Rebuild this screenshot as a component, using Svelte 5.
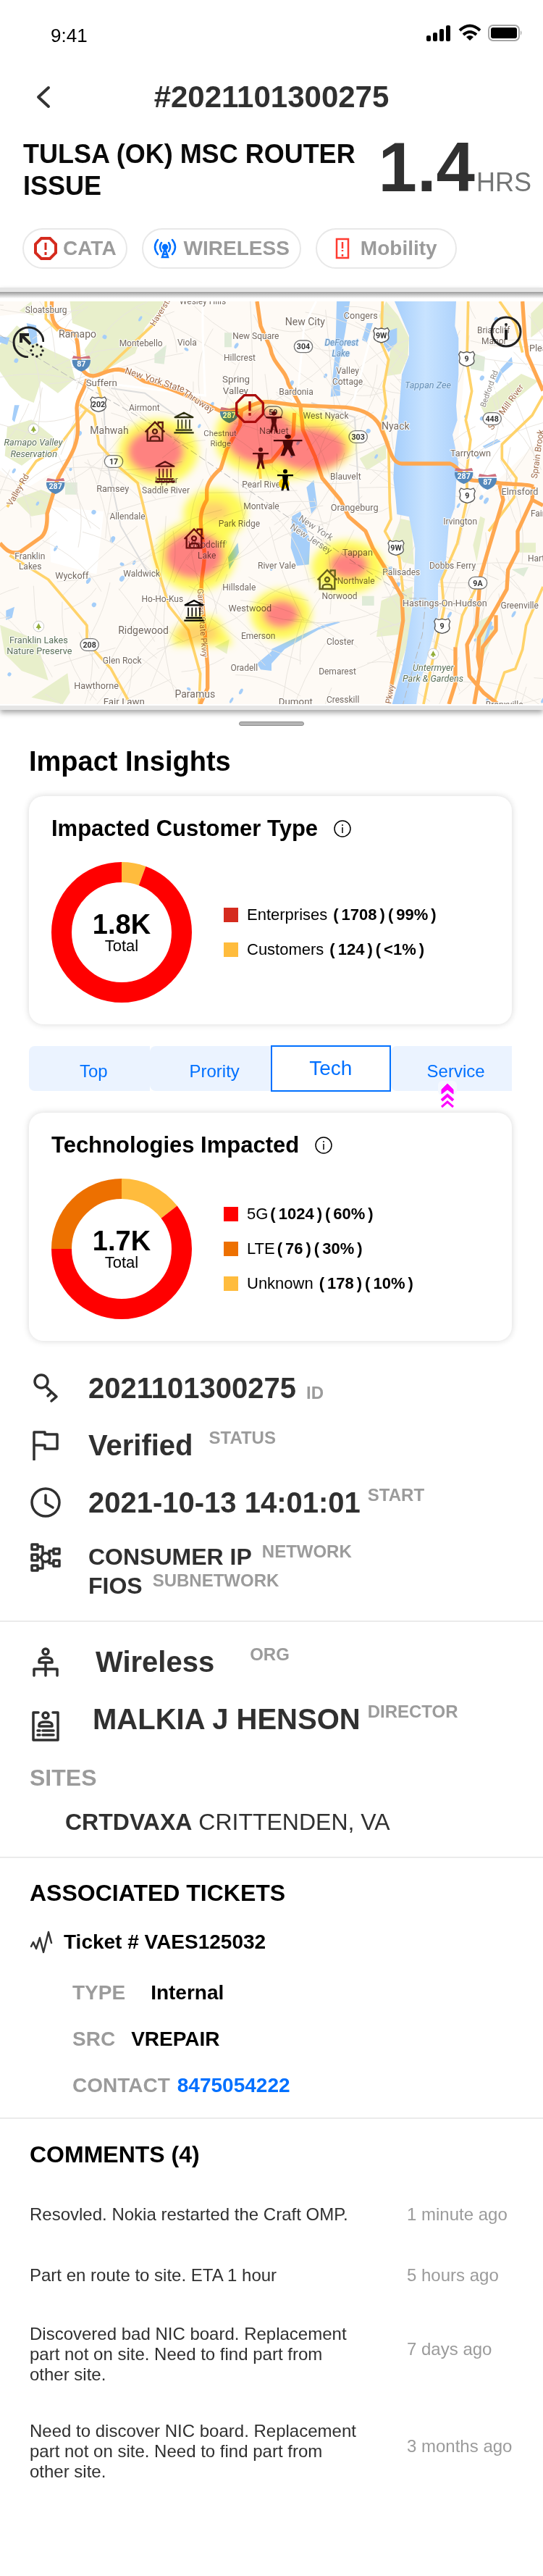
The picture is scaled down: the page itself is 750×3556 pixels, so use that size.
<script>
  const impact = [
    {
      title: 'Impacted Customer Type', total: '1.8K',
      slices: [{ color: '#ffbc3d', from: 0, size: 5.6 }, { color: '#ff0000', from: 5.6, size: 94.4 }],
      legend: [
        { color: '#d52b1e', name: 'Enterprises', count: '1708', share: '99%' },
        { color: '#ffbc3d', name: 'Customers', count: '124', share: '<1%' }
      ]
    },
    {
      title: 'Technologies Impacted', total: '1.7K',
      slices: [{ color: '#ffbc3d', from: 0, size: 14.5 }, { color: '#ff0000', from: 14.5, size: 60.5 }, { color: '#ed7000', from: 75, size: 25 }],
      legend: [
        { color: '#ff0000', name: '5G', count: '1024', share: '60%', tight: true },
        { color: '#ed7000', name: 'LTE', count: '76', share: '30%', tight: true },
        { color: '#ffbc3d', name: 'Unknown', count: '178', share: '10%' }
      ]
    }
  ];
  const tabs = ['Top', 'Prority', 'Tech', 'Service'];
  let selected = $state('Tech');

  const ticket = [
    { label: 'TYPE', value: 'Internal', gap: 'wide' },
    { label: 'SRC', value: 'VREPAIR', gap: 'mid' }
  ];
  const comments = [
    { text: 'Resovled. Nokia restarted the Craft OMP.', time: '1 minute ago' },
    { text: 'Part en route to site. ETA 1 hour', time: '5 hours ago' },
    { text: 'Discovered bad NIC board. Replacement part not on site. Need to find part from other site.', time: '7 days ago', long: true },
    { text: 'Need to discover NIC board. Replacement part not on site. Need to find part from other site.', time: '3 months ago', long: true }
  ];

  // Map places, split by quadrant: x, baseline y, text, size, kind
  const quads = [
    { x: 0, y: -48, places: [
      [191, 95, 'Sloatsburg', 36], [321, 199, 'Ramapo', 42], [584, 235, 'Montebello', 36], [775, 232, 'Viola', 36],
      [840, 60, 'Wesley Hills', 36], [1060, 204, 'New Square', 36], [993, 295, 'Hillcrest', 36], [978, 385, 'Spring', 40],
      [976, 433, 'Valley', 40], [421, 399, 'Suffern', 40], [598, 500, 'Airmont', 36], [453, 596, 'Mahwah', 42],
      [912, 605, 'Chestnut', 34], [914, 648, 'Ridge', 34], [138, 645, 'Ramapo Valley', 38, 'park'], [140, 692, 'Reservation', 38, 'park'],
      [467, 836, 'Ramsey', 38], [690, 802, 'Upper', 36], [687, 844, 'Saddle River', 36], [1088, 818, 'Pearl River', 36], [1135, 596, 'Nanuet', 38]
    ] },
    { x: 1125, y: -48, places: [
      [139, 148, 'New City', 42], [370, 121, 'Congers', 38], [290, 231, 'DeForest', 36, 'water'], [287, 276, 'Lake', 36, 'water'],
      [315, 349, 'Valley', 36], [315, 394, 'Cottage', 36], [102, 436, 'Bardonia', 36], [225, 534, 'West Nyack', 36],
      [514, 580, 'Nyack', 42], [648, 409, 'Tappan Zee', 38, 'water'], [920, 181, 'Briarcliff', 36], [922, 224, 'Manor', 36],
      [1175, 255, 'Pleasantville', 38], [825, 690, 'Tarrytown', 38], [307, 787, 'Blauvelt', 36], [1029, 850, 'Elmsford', 38]
    ] },
    { x: 0, y: 822, places: [
      [528, 82, 'Allendale', 36], [1083, 40, 'Montvale', 36], [991, 112, 'Park Ridge', 36], [857, 199, 'Woodcliff', 36], [857, 243, 'Lake', 36],
      [124, 246, 'Franklin', 36], [125, 289, 'Lakes', 36], [298, 326, 'Wyckoff', 38], [587, 317, 'Waldwick', 36], [1147, 284, 'River Vale', 36],
      [991, 376, 'Hillsdale', 36], [673, 422, 'Ho-Ho-Kus', 36], [1036, 463, 'Westwood', 38], [1070, 577, 'Emerson', 36],
      [594, 556, 'Ridgewood', 42], [160, 593, 'Franklin Lakes', 38, 'green'], [163, 640, 'Nature Preserve', 38, 'green'],
      [506, 679, 'Glen Rock', 36], [1012, 709, 'Oradell', 36], [399, 783, 'Hawthorne', 38], [808, 819, 'Paramus', 42], [514, 849, 'Fair Lawn', 40]
    ] },
    { x: 1125, y: 822, places: [
      [344, 46, 'Orangeburg', 38], [357, 231, 'Tappan', 38], [538, 313, 'Palisades', 36], [350, 347, 'Northvale', 36], [282, 412, 'Norwood', 36],
      [285, 600, 'Closter', 36], [273, 722, 'Demarest', 36], [296, 840, 'Cresskill', 36], [100, 849, 'Dumont', 40],
      [782, 101, 'Irvington', 36], [750, 285, 'Dobbs Ferry', 36], [718, 441, 'Hastings-On-Hudson', 38], [1028, 450, 'Greenville', 36],
      [1140, 70, 'Fairview', 36], [1140, 256, 'Hartsdale', 36], [670, 707, 'Untermyer', 38, 'park'], [669, 753, 'Park & Gardens', 38, 'park'],
      [965, 862, 'Bronxville', 36]
    ] }
  ];
  const shields = [
    { t: '87', x: 337, y: 257, k: 'i' }, { t: '287', x: 230, y: 764, k: 'i' }, { t: '287', x: 950, y: 470, k: 'i' },
    { t: '202', x: 408, y: 426, k: 'u' }, { t: '17', x: 471, y: 663, k: 's' }, { t: '304', x: 1257, y: 187, k: 's' },
    { t: '9W', x: 1580, y: 140, k: 'u' }, { t: '9', x: 1934, y: 238, k: 'u' }, { t: '448', x: 2039, y: 486, k: 's' },
    { t: '303', x: 1484, y: 561, k: 's' }, { t: '287', x: 1922, y: 722, k: 'i' }, { t: '87', x: 2020, y: 746, k: 'i' },
    { t: '9', x: 1936, y: 804, k: 'u' }, { t: '208', x: 371, y: 1422, k: 's' }, { t: '9W', x: 1641, y: 1020, k: 'u' },
    { t: '9A', x: 1980, y: 1166, k: 's' }, { t: '9', x: 1832, y: 1344, k: 'u' }, { t: '59', x: 1132, y: 460, k: 's' }
  ];
  // Small streets and ponds, laid out from a fixed seed
  let seed = 11;
  const rnd = () => ((seed = (seed * 16807) % 2147483647) / 2147483647);
  const streets = Array.from({ length: 230 }, () => {
    const x = rnd() * 2250, y = rnd() * 1668, a = rnd() * 6.3, l = 60 + rnd() * 190;
    const b = a + rnd() - 0.5;
    const n = Math.round;
    return `M${n(x)} ${n(y)}q${n(Math.cos(a) * l)} ${n(Math.sin(a) * l)} ${n(Math.cos(b) * l * 2)} ${n(Math.sin(b) * l * 2)}`;
  }).join('');
  const ponds = Array.from({ length: 60 }, () => ({ x: rnd() * 2250, y: rnd() * 1668, a: 5 + rnd() * 5, b: 6 + rnd() * 9 }));
</script>

{#snippet info(size, w)}
  <svg width={size} height={size} viewBox="0 0 24 24" fill="none" stroke="currentColor" stroke-width={w} aria-hidden="true">
    <circle cx="12" cy="12" r="11" /><path d="M12 10v8" /><path d="M12 6v2" />
  </svg>
{/snippet}

{#snippet house(x, y, c)}
  <g transform="translate({x} {y})" fill="none" stroke={c} stroke-width="7">
    <path d="M-40 2L0 -39L40 2M-31 -5V39H31V-5M14 -30V-38H32V-12" />
    <circle cx="0" cy="0" r="9" /><path d="M-19 36V30Q-19 20 0 20Q19 20 19 30V36" />
  </g>
{/snippet}

{#snippet bank(x, y, c)}
  <g transform="translate({x} {y})" fill="none" stroke={c} stroke-width="7">
    <path d="M-37 -22L0 -41L37 -22Z" stroke-linejoin="round" />
    <path d="M-24 -12V25M-8 -12V25M8 -12V25M24 -12V25" stroke-width="5" /><path d="M-34 31H34M-41 42H41" />
  </g>
{/snippet}

{#snippet person(x, y, c, s)}
  <g transform="translate({x} {y}) scale({s} 1)" fill={c}>
    <ellipse cx="0" cy="-36" rx={s > 1 ? 7 : 9} ry="9" /><path d="M-33 -23H33V-16H12L9 6L17 44H8L0 16L-8 44H-17L-9 6L-12 -16H-33Z" />
  </g>
{/snippet}

<div class="page">
  <header>
    <div class="status">
      <span>9:41</span>
      <svg width="134" height="26" viewBox="0 0 134 26" aria-hidden="true">
        <rect x="1" y="16" width="6" height="8" rx="2" /><rect x="10" y="12" width="6" height="12" rx="2" />
        <rect x="19" y="7" width="6" height="17" rx="2" /><rect x="28" y="2" width="6" height="22" rx="2" />
        <g fill="none" stroke="#000" stroke-width="4"><path d="M47 9Q61 -4 75 9M52 15Q61 7 70 15" /></g>
        <path d="M61 23L56 18Q61 14 66 18Z" />
        <rect x="87" y="2" width="42" height="21" rx="6" fill="none" stroke="#a6a6a6" stroke-width="2" />
        <rect x="90" y="5" width="36" height="15" rx="3" /><path d="M131 9Q134 12 131 16Z" fill="#a6a6a6" />
      </svg>
    </div>
    <nav>
      <button class="back" aria-label="Back">
        <svg width="20" height="32" viewBox="0 0 20 32" fill="none" stroke="#333" stroke-width="4" stroke-linecap="round" stroke-linejoin="round"><path d="M17 3L3 16L17 29" /></svg>
      </button>
      <p class="number">#2021101300275</p>
    </nav>
    <div class="headline">
      <h1>TULSA (OK) MSC ROUTER ISSUE</h1>
      <p class="age"><strong>1.4</strong><span>HRS</span></p>
    </div>
    <ul class="pills">
      <li class="cata">
        <svg width="34" height="34" viewBox="0 0 34 34" fill="none" stroke="#d52b1e" stroke-width="4"><path d="M11 3H23L31 11V23L23 31H11L3 23V11Z" /><path d="M17 9V19M17 22V26" stroke-width="3" /></svg>
        CATA
      </li>
      <li class="wireless">
        <svg width="32" height="28" viewBox="0 0 32 28" fill="none" stroke="#0070ff" stroke-width="2.5" stroke-linecap="round"><circle cx="16" cy="12" r="3" fill="#0070ff" /><path d="M11 6Q7 12 11 18M21 6Q25 12 21 18M6 2Q-2 12 6 22M26 2Q34 12 26 22M16 14L12 26H20ZM13 22H19" /></svg>
        WIRELESS
      </li>
      <li class="mobility">
        <svg width="20" height="30" viewBox="0 0 20 30" fill="none" stroke="#ff3b30" stroke-width="2.5"><rect x="2" y="2" width="16" height="26" /><path d="M10 6V15M10 17V19M10 23V26" /></svg>
        Mobility
      </li>
    </ul>
  </header>

  <section class="mapbox" aria-label="Impact map">
    <div class="map">
      <svg class="canvas" viewBox="0 0 2250 1668" aria-hidden="true">
        <defs>
          <linearGradient id="river"><stop offset="0" stop-color="#a4cdfb" /><stop offset=".5" stop-color="#c8e3ff" /><stop offset="1" stop-color="#add2fc" /></linearGradient>
          <filter id="soft" x="-50%" y="-50%" width="200%" height="200%"><feGaussianBlur stdDeviation="16" /></filter>
        </defs>
        <rect width="2250" height="1668" fill="#fefaf5" />
        <g fill="#fff"><path d="M0 60L600 0L560 200L330 420L300 660L100 780L0 700ZM200 850L430 870L400 1130L210 1080ZM1930 230L2250 130V560L2000 800L1900 560Z" /></g>
        <g fill="#e8efcb">
          <path d="M290 0H690L600 110L560 215L430 290L375 310L350 200L400 130L300 90Z" />
          <path d="M70 100L160 180L290 240L310 320L240 380L170 330L140 420L90 400L40 350L0 290V180ZM30 520L130 490L220 560L240 620L170 620L90 680L20 640ZM60 820L170 780L220 800L190 880L130 890Z" />
          <path d="M1600 0L1650 60L1695 150L1690 230L1660 300L1600 310L1620 190L1570 60Z" />
          <path d="M1660 900L1705 910L1715 1090L1670 1080L1625 990ZM1580 1240L1710 1180L1700 1380L1640 1570L1610 1640L1650 1380L1560 1390Z" />
          <path d="M0 1340L150 1400L180 1500L200 1570L90 1530L20 1460ZM1490 650L1600 590L1600 650L1520 700Z" />
          <path d="M1990 430L2160 300L2230 330L2110 430L2010 470ZM1990 890L2010 900L1975 1080L1960 1010ZM1960 1340L2030 1300L2050 1370L1990 1500ZM2200 50L2250 0V110L2200 150ZM2150 1000H2220V1040H2150Z" />
          <path d="M130 1640L280 1540L290 1620L260 1668ZM890 1430L950 1400L940 1460ZM80 40L130 0L140 60Z" />
        </g>
        <g fill="#dfebd8"><path d="M640 220L690 180L680 260L640 255ZM930 130H960V190H930ZM1945 210L2010 230L2005 290L1950 280ZM270 750H320V800H270ZM2120 1110L2190 1100L2170 1140ZM1500 1220H1550V1260H1500Z" /></g>
        <g fill="#a5cef9">
          <path d="M110 90L150 100L155 170L130 180ZM0 145L40 150L30 180L0 170ZM60 430L80 430L60 500L50 490ZM1395 0H1450L1430 130L1405 260L1410 390L1370 395L1390 200ZM1520 90L1545 90L1520 170L1500 160ZM1590 130L1645 110V170L1610 210L1590 180Z" />
          <path d="M2050 330L2075 280L2120 230L2125 260L2080 300L2060 340ZM2000 600L2060 570L2075 580L2010 610ZM1270 770L1300 740L1315 850L1290 880ZM1210 890L1245 870L1285 990L1280 1090L1230 1095L1205 1020ZM25 1280L60 1265L50 1310L25 1320ZM945 1060L985 1000L990 1040L950 1110ZM1125 1440L1210 1400L1340 1340L1400 1325L1410 1330L1320 1360L1180 1440L1125 1500ZM1065 1500L1125 1450V1530L1080 1525ZM1985 1480L2030 1320L2040 1330L1990 1500Z" />
          {#each ponds as p}<ellipse cx={p.x} cy={p.y} rx={p.a} ry={p.b} transform="rotate(30 {p.x} {p.y})" />{/each}
        </g>
        <path d={streets} fill="none" stroke="#e9e5df" stroke-width="3" />
        <path d="M1635 0L1695 142V222L1665 302L1655 432L1650 512L1635 632L1630 732L1640 822L1645 882L1695 892L1720 1022L1715 1222L1685 1422L1665 1522L1625 1668H1725L1735 1602L1785 1422L1815 1302V1172L1845 1102L1860 922L1885 852L1890 752L1900 672L1875 552L1895 492L1890 432L1900 302V152L1885 102L1890 0Z" fill="url(#river)" />
        <g fill="none" stroke="#b9b9b9" stroke-width="3" stroke-dasharray="30 12"><path d="M0 140L350 350L640 515L1130 850L1480 1090L1700 1230H1765L1750 1380L1670 1668" /></g>
        <g fill="none" stroke="#ddd" stroke-width="6"><path d="M430 430L440 650L500 930L610 1120M740 480L600 380L460 360M1290 420L1470 480L1490 870" /></g>
        <g fill="none" stroke="#fff" stroke-width="9"><path d="M840 0V130L850 390L480 345M1310 0L1260 100L1235 370L1210 420M2250 220L2050 370L1960 390M1460 430L1480 360L1540 130M1980 530L2080 480" /></g>
        <g fill="none" stroke="#ffd36b" stroke-width="11" stroke-linejoin="round">
          <path d="M690 0L640 92L560 167L430 290M190 0V72L240 122M330 427L390 472L410 592L500 692L570 752L595 852L640 1062L700 1262L780 1362L830 1542L825 1668M405 347L420 402M360 447L235 612L150 662L100 732L30 852" />
          <path d="M40 1052L200 1152L360 1342V1412L460 1522L540 1668M1585 0L1580 172L1610 242L1590 352L1600 432L1580 512L1610 592L1615 832L1620 902L1595 952L1655 1062L1670 1202M1940 0L1935 252L1955 372L1930 492L1950 572L1935 692V822L1895 1002L1830 1152L1840 1272L1785 1522L1755 1668" />
          <path d="M2070 0L2135 92L2165 212M2250 392L2205 472L2080 592V652L2140 732L2130 812L2025 952M1975 1182L1915 1302L1890 1432M2250 1182L2180 1342L2165 1442L2135 1522L2090 1537L2045 1668M1075 690L1080 735" />
        </g>
        <g fill="none" stroke="#ffa850" stroke-width="16" stroke-linejoin="round">
          <path d="M215 0C210 72 220 107 270 122C320 127 320 152 325 212C330 282 350 307 385 309C420 307 440 282 490 282C540 287 560 312 600 332C700 352 800 402 920 457L1000 452C1060 417 1090 414 1125 417L1225 430L1435 439C1505 447 1565 472 1585 542C1615 602 1620 672 1665 672H1865C1905 682 1915 742 1965 742L2045 747C2075 762 2185 752 2210 767" />
          <path d="M360 322C350 372 320 392 318 442L322 512C330 632 240 692 225 782L195 880C195 882 200 952 170 977L85 1037C40 1052 20 1022 0 1002" />
          <path d="M1000 452L995 512L940 612L915 692Q860 740 857 780V822C820 882 830 922 845 1022C855 1082 830 1142 835 1192L860 1512V1602L830 1668" />
          <path d="M1065 0L1080 102L1120 192C1130 262 1185 282 1195 342L1245 432L1255 532L1305 642L1335 732L1410 822L1445 892L1515 952L1545 1022L1625 1152L1665 1222L1670 1322L1645 1472L1612 1640M1220 462L1215 552L1125 662L1080 668" />
          <path d="M2165 0L2175 152L2185 222L2250 370M2070 760L2085 822L2025 1022L1990 1142L1975 1342L1935 1422L1945 1552L2005 1622L2060 1665M2210 767L2205 822L2145 952V1032L2105 1112L2100 1192L2055 1272L1985 1392L1980 1472L1990 1522L1965 1668M2055 1300V1362L2000 1432L1990 1522M1887 1432V1582L1860 1668M2205 822L2250 845" />
        </g>
        {#each quads as q}
          <g class="places" transform="translate({q.x} {q.y})">
            {#each q.places as [x, y, t, s, k]}<text {x} {y} font-size={s} class={k}>{t}</text>{/each}
          </g>
        {/each}
        <g class="places road">
          <text transform="translate(515 298) rotate(18)" font-size="38">New York State</text>
          <text transform="translate(755 385) rotate(33)" font-size="38">Thruway</text>
          <text transform="translate(640 105) rotate(-58)" font-size="34">Haverstraw</text>
          <text transform="translate(48 850) rotate(-60)" font-size="36">Valley Rd</text>
          <text transform="translate(818 1190) rotate(86)" font-size="34">Garden State Pkwy</text>
          <text transform="translate(1620 1668) rotate(-80)" font-size="34">Pkwy</text>
          <text transform="translate(2040 535) rotate(-54)" font-size="36">Saw Mill River</text>
          <text transform="translate(2225 735) rotate(-82)" font-size="36">Sprain Brook</text>
          <text class="gray" transform="translate(2010 440) rotate(-70)" font-size="32">Bedford Rd</text>
          <text class="gray" transform="translate(1235 905) rotate(33)" font-size="38">New York</text>
          <text class="gray" transform="translate(1200 940) rotate(33)" font-size="38">New Jersey</text>
        </g>
        {#each shields as s}
          <g class="shield" transform="translate({s.x} {s.y})">
            {#if s.k === 'i'}
              <path d="M-38 -15H38Q40 20 0 34Q-40 20 -38 -15Z" fill="#5488bb" /><path d="M-38 -20L-33 -32L0 -26L33 -32L38 -20Z" fill="#cf7280" />
              <text y="14" fill="#fff">{s.t}</text>
            {:else if s.k === 'u'}
              <path d="M-26 -30L-14 -25L0 -29L14 -25L26 -30L33 -18Q25 -5 31 8Q32 24 0 31Q-32 24 -31 8Q-25 -5 -33 -18Z" fill="#fff" stroke="#555" stroke-width="4" />
              <text y="12" fill="#333">{s.t}</text>
            {:else}
              <rect x="-38" y="-25" width="76" height="50" rx="25" fill="#fff" stroke="#777" stroke-width="4" />
              <text y="12" fill="#333">{s.t}</text>
            {/if}
          </g>
        {/each}
        {#each [[139, 529], [160, 1346], [1795, 1460]] as [x, y]}
          <g transform="translate({x} {y})"><circle r="22" fill="#fff" stroke="#ccc" stroke-width="3" /><path d="M0 -13L11 7H3V13H-3V7H-11Z" fill="#93ae3a" /></g>
        {/each}
        <g class="heat" filter="url(#soft)">
          <g fill="#ffff5c">
            <ellipse cx="655" cy="622" rx="165" ry="135" /><ellipse cx="1180" cy="590" rx="285" ry="145" /><ellipse cx="1050" cy="540" rx="155" ry="115" />
            <ellipse cx="810" cy="1055" rx="165" ry="145" /><ellipse cx="890" cy="880" rx="130" ry="105" /><path d="M715 1405V1370Q800 1280 900 1310L960 1410V1425H720Z" />
            <ellipse cx="1165" cy="1297" rx="125" ry="105" /><ellipse cx="1440" cy="1100" rx="150" ry="110" />
          </g>
          <g fill="#ffd870"><ellipse cx="885" cy="870" rx="65" ry="40" /><ellipse cx="820" cy="1375" rx="85" ry="42" /></g>
          <g fill="#ff8585">
            <ellipse cx="645" cy="622" rx="118" ry="92" /><ellipse cx="1080" cy="560" rx="145" ry="115" /><ellipse cx="1285" cy="612" rx="150" ry="92" />
            <ellipse cx="805" cy="1052" rx="122" ry="98" /><ellipse cx="1165" cy="1295" rx="76" ry="58" /><ellipse cx="1445" cy="1092" rx="82" ry="55" />
          </g>
        </g>
        <circle cx="1177" cy="755" r="22" fill="#ffd500" />
        {@render house(642, 539, '#5a1a10')}
        {@render house(804, 982, '#6a0d0d')}
        {@render house(1356, 1152, '#66601a')}
        {@render bank(762, 502, '#2e3010')}
        {@render bank(684, 705, '#5a1010')}
        {@render bank(804, 1280, '#000')}
        {@render person(1080, 650, '#5b0d0d', 1)}
        {@render person(1135, 500, '#5a0a0a', 1)}
        {@render person(1193, 596, '#480707', 1.8)}
        {@render person(1182, 740, '#000', 1)}
        <g transform="translate(1035 444)" fill="none" stroke="#a90d0d" stroke-width="10"><path d="M-23 -55H23L55 -23V23L23 55H-23L-55 23V-23Z" /><path d="M0 -30V10M0 18V29" /></g>
      </svg>
      <button class="tool reset" aria-label="Select area">
        <svg width="44" height="44" viewBox="0 0 44 44" fill="none" stroke="#222" stroke-width="3"><path d="M43 22A20.5 20.5 0 1 0 22 43" /><path d="M25 25L14 14M12 23V12H23" stroke-width="4" /><circle cx="34" cy="34" r="8" stroke-width="3.5" stroke-linecap="round" stroke-dasharray="0 6.28" /></svg>
      </button>
      <button class="tool about" aria-label="Map information">
        <svg width="44" height="44" viewBox="0 0 44 44" fill="none" stroke="#222" stroke-width="3"><circle cx="22" cy="22" r="20" /><path d="M22 19V33" stroke-width="4" /><circle cx="22" cy="12" r="2" fill="#222" stroke="none" /></svg>
      </button>
    </div>
  </section>
  <div class="handle"></div>

  <section class="insights">
    <h2>Impact Insights</h2>
    {#each impact as card, i}
      {#if i === 1}
        <div class="tabs" role="tablist">
          {#each tabs as tab}
            <button role="tab" aria-selected={selected === tab} class:active={selected === tab} onclick={() => (selected = tab)}>{tab}</button>
          {/each}
          <svg class="hint" width="26" height="38" viewBox="0 0 26 38" aria-hidden="true">
            <rect width="26" height="20" rx="6" fill="#f5f8ff" />
            <path d="M13 4L21 12V18L13 12L5 18V12Z" fill="#f0f" stroke="#f0f" stroke-width="1" />
            <path d="M5 27L13 20L21 27" fill="none" stroke="#f0f" stroke-width="4" /><path d="M5 36L13 29L21 36" fill="none" stroke="#f0f" stroke-width="3" />
          </svg>
        </div>
      {/if}
      <article class="card">
        <h3>{card.title} {@render info(24, 1.5)}</h3>
        <div class="chart">
          <div class="donut">
            <svg viewBox="0 0 194 194" aria-hidden="true">
              {#each card.slices as s}
                <circle cx="97" cy="97" r="83" fill="none" stroke={s.color} stroke-width="28" pathLength="100" stroke-dasharray="{s.size} {100 - s.size}" stroke-dashoffset={-s.from} transform="rotate(-90 97 97)" />
              {/each}
            </svg>
            <p><strong>{card.total}</strong><span>Total</span></p>
          </div>
          <ul class="legend">
            {#each card.legend as l}
              <li class:tight={l.tight}><i style:background={l.color}></i><span>{l.name}</span><b>(<em>{l.count}</em>)</b><b>(<em>{l.share}</em>)</b></li>
            {/each}
          </ul>
        </div>
      </article>
    {/each}
  </section>

  <section class="details ruled">
    <div class="row">
      <svg width="42" height="42" viewBox="0 0 42 42"><circle cx="15" cy="12" r="9" /><path d="M21 19L36 33L29 39M29 27L24 32" /></svg>
      <p class="low gap-small"><strong>2021101300275</strong><span>ID</span></p>
    </div>
    <div class="row">
      <svg width="42" height="42" viewBox="0 0 42 42"><path d="M5 41V3H20V6H37V26H20V21H5" /></svg>
      <p class="gap-mid"><strong>Verified</strong><span>STATUS</span></p>
    </div>
    <div class="row">
      <svg width="42" height="42" viewBox="0 0 42 42"><circle cx="21" cy="21" r="19" /><path d="M21 11V22L31 28" /></svg>
      <p><strong>2021-10-13 14:01:01</strong><span>START</span></p>
    </div>
    <div class="row network">
      <svg width="42" height="42" viewBox="0 0 42 42"><path d="M2 3H10V10H2ZM2 17H10V25H2ZM2 32H10V39H2ZM32 9H40V16H32ZM32 25H40V33H32ZM10 6H17V16M10 36H17V26M10 21H14M26 17V12H32M26 25V29H32" /><circle cx="21" cy="21" r="6" /></svg>
      <div>
        <p class="small"><strong>CONSUMER IP</strong><span>NETWORK</span></p>
        <p class="small"><strong>FIOS</strong><span>SUBNETWORK</span></p>
      </div>
    </div>
  </section>

  <section class="org ruled">
    <div class="row">
      <svg width="42" height="42" viewBox="0 0 42 42"><circle cx="21" cy="7" r="4" /><path d="M12 22V20Q12 15 21 15Q30 15 30 20V22ZM21 22V40M5 40V31H37V40" /></svg>
      <p class="gap-wide"><strong>Wireless</strong><span>ORG</span></p>
    </div>
    <div class="row badge">
      <svg width="42" height="42" viewBox="0 0 42 42"><path d="M11 2H4V40H38V2H31" /><circle cx="21" cy="6" r="4" /><path d="M12 21V19Q12 15 21 15Q30 15 30 19V21ZM10 27H13M17 27H32M10 33H13M17 33H32" /></svg>
      <p><strong>MALKIA J HENSON</strong><span>DIRECTOR</span></p>
    </div>
    <h4>SITES</h4>
    <p class="site"><strong>CRTDVAXA</strong> CRITTENDEN, VA</p>
  </section>

  <section class="tickets ruled">
    <h2>ASSOCIATED TICKETS</h2>
    <h3>
      <svg width="32" height="34" viewBox="0 0 32 34" fill="none" stroke="#333" stroke-width="2.5" stroke-linejoin="round" stroke-linecap="round"><path d="M2 23L5 17L9 26L14 11L19 31L26 3L30 18" /></svg>
      Ticket # VAES125032
    </h3>
    <dl>
      {#each ticket as t}
        <div class={t.gap}><dt>{t.label}</dt><dd>{t.value}</dd></div>
      {/each}
      <div><dt>CONTACT</dt><dd><a href="tel:8475054222">8475054222</a></dd></div>
    </dl>
  </section>

  <section class="comments">
    <h2>COMMENTS (4)</h2>
    <ul>
      {#each comments as c}
        <li class:long={c.long}><p>{c.text}</p><time>{c.time}</time></li>
      {/each}
    </ul>
  </section>
</div>

<style>
  :global(body) { margin: 0; background: #fff; }
  .page { font-family: "Liberation Sans", Arial, sans-serif; color: #000; background: #fff; overflow: hidden; }
  h1, h2, h3, h4, p, ul, dl, dd { margin: 0; padding: 0; }
  ul { list-style: none; }
  button { font-family: inherit; border: 0; background: none; padding: 0; cursor: pointer; }
  svg { display: block; flex: none; }

  header { padding-bottom: 26px; }
  .status { display: flex; justify-content: space-between; align-items: center; height: 98px; padding: 0 28px 0 70px; font-size: 26px; }
  .status svg { margin-bottom: 6px; }
  nav { display: grid; grid-template-columns: 80px 1fr 80px; align-items: center; height: 72px; }
  .back { justify-self: end; padding-right: 10px; }
  .number { text-align: center; font-size: 42px; font-weight: 700; color: #303030; }
  .headline { display: flex; justify-content: space-between; align-items: flex-end; margin-top: 13px; padding: 0 16px 0 32px; }
  h1 { flex: 1; max-width: 480px; font-size: 36px; line-height: 44px; color: #0a0a0a; }
  .age { display: flex; align-items: baseline; gap: 2px; }
  .age strong { font-size: 96px; line-height: 96px; color: #303030; }
  .age span { font-size: 36px; line-height: 36px; color: #747676; }
  .pills { display: flex; gap: 20px; margin-top: 36px; padding-left: 31px; }
  .pills li { display: flex; align-items: center; box-sizing: border-box; height: 56px; border: 2px solid #e8e8e8; border-radius: 28px; font-size: 28px; font-weight: 700; color: #9b9b9b; }
  .cata { gap: 7px; padding: 0 13px; }
  .wireless { gap: 10px; padding: 0 14px; }
  .mobility { gap: 15px; padding: 0 25px; }

  .mapbox { border-top: 6px solid #e5e5e5; border-bottom: 6px solid #e5e5e5; box-shadow: 0 4px 7px rgba(0, 0, 0, .35); padding: 0 0 2px; }
  .mapbox::before { content: ""; display: block; height: 9px; margin-bottom: 4px; background: linear-gradient(#9b9b9b, #fff); }
  .map { position: relative; }
  .canvas { width: 100%; height: auto; }
  .places { font-family: Roboto, sans-serif; }
  .places text { fill: #75695f; text-anchor: middle; stroke: #fff; stroke-width: 6px; paint-order: stroke; stroke-linejoin: round; }
  .places .park { fill: #5c7058; font-style: italic; }
  .places .green { fill: #5c7058; }
  .places .water { fill: #6690b8; font-style: italic; stroke: #cfe5fb; }
  .road text { text-anchor: start; fill: #a06a48; }
  .road .gray { fill: #8c8782; }
  .shield text { font: 700 32px Roboto, sans-serif; text-anchor: middle; }
  .heat { mix-blend-mode: multiply; }
  .tool { position: absolute; }
  .reset { left: 17px; top: 34px; }
  .about { right: 29px; top: 20px; }
  .handle { width: 88px; height: 4px; margin: 16px auto 27px; border: 1px solid #8c8c8c; border-radius: 3px; background: #b5b5b5; }

  .insights { padding: 0 43px 0 40px; }
  .insights h2 { font-size: 38px; line-height: 44px; margin-bottom: 26px; }
  .card { padding: 29px 31px 30px; border-radius: 20px; box-shadow: 0 0 10px rgba(0, 0, 0, .16); }
  .card h3 { display: flex; align-items: center; gap: 22px; font-size: 31px; line-height: 32px; margin-bottom: 30px; }
  .chart { display: flex; align-items: center; gap: 44px; }
  .donut { display: grid; place-items: center; width: 194px; height: 194px; }
  .donut > * { grid-area: 1 / 1; }
  .donut svg { width: 100%; }
  .donut p { display: flex; flex-direction: column; align-items: center; padding-top: 2px; }
  .donut strong { font-size: 38px; line-height: 36px; }
  .donut span { font-size: 22px; line-height: 24px; }
  .legend { display: grid; gap: 24px; }
  .legend li { display: flex; align-items: center; font-size: 22px; line-height: 24px; }
  .legend i { width: 20px; height: 20px; margin-right: 12px; }
  .legend span { margin-right: 8px; }
  .legend .tight span { margin-right: 3px; }
  .legend b { margin-right: 4px; }
  .legend em { font-style: normal; margin: 0 4px; }

  .tabs { position: relative; display: grid; grid-template-columns: repeat(4, 1fr); height: 62px; margin: 30px 0; }
  .tabs button { padding: 8px 0 0 12px; font-size: 24px; color: #0070ff; background: #ebf3ff; border-radius: 8px 0 0 8px; }
  .tabs .active { padding: 0; margin: -1px 0; font-size: 28px; background: #fff; border: 2px solid #0070ff; border-radius: 0; }
  .hint { position: absolute; right: 76px; top: 48px; }

  .ruled { border-bottom: 2px solid #ebebeb; }
  .row { display: flex; align-items: center; height: 79px; padding-left: 42px; gap: 38px; }
  .row svg { fill: none; stroke: #303030; stroke-width: 3.5px; stroke-linejoin: round; stroke-linecap: round; }
  .row p { display: flex; gap: 10px; line-height: 40px; }
  .row strong { font-size: 40px; color: #303030; }
  .row span { font-size: 24px; line-height: 20px; font-weight: 700; color: #9b9b9b; }
  .row .low span { align-self: flex-end; line-height: 26px; }
  .row .small strong { font-size: 32px; }
  .row .small span { line-height: 26px; }
  .row .small { gap: 14px; }
  .row .gap-small { gap: 14px; }
  .row .gap-mid { gap: 22px; }
  .row .gap-wide { gap: 49px; }
  .details { padding: 25px 0 28px; }
  .network { height: auto; align-items: flex-start; padding-top: 16px; }
  .org { padding: 15px 0 32px; }
  .org .row { gap: 48px; }
  .org .badge { gap: 44px; }
  .org .badge svg { margin-top: 20px; }
  h4 { margin: 26px 41px 0; font-size: 32px; line-height: 32px; color: #9b9b9b; }
  .site { margin: 29px 40px 0 90px; font-size: 32px; line-height: 32px; color: #303030; }

  .tickets { padding: 32px 41px 12px; }
  .tickets h2, .comments h2 { font-size: 32px; line-height: 32px; }
  .tickets h3 { display: flex; align-items: center; gap: 15px; margin: 32px 0 18px; font-size: 28px; line-height: 40px; }
  dl { padding-left: 59px; font-size: 28px; font-weight: 700; }
  dl div { display: flex; align-items: center; gap: 10px; height: 64px; }
  dl .mid { gap: 22px; }
  dl .wide { gap: 35px; }
  dt { color: #9b9b9b; }
  a { color: #0070ff; text-decoration: none; }

  .comments { padding: 33px 0 60px 41px; }
  .comments ul { display: grid; gap: 50px; margin-top: 50px; }
  .comments li { display: grid; grid-template-columns: 460px 1fr; column-gap: 61px; align-items: center; min-height: 34px; font-size: 24px; line-height: 28px; color: #303030; }
  .comments time { color: #9b9b9b; }
  .comments .long time { padding-bottom: 14px; }
</style>
